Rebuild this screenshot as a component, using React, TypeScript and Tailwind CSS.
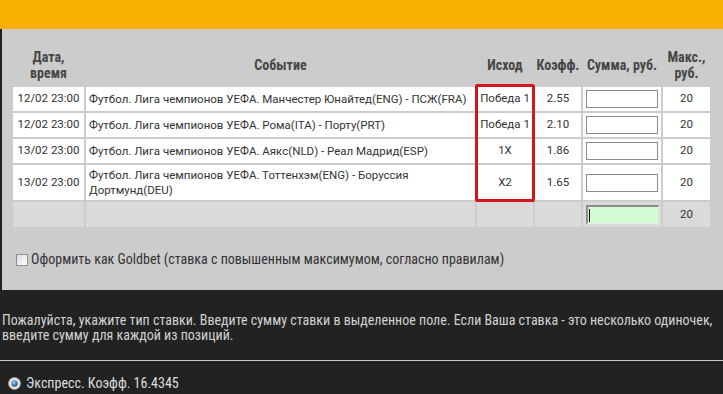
import React from "react";

type Row = { date: string; event: string; outcome: string; coef: string; max: string };

const ROWS: Row[] = [
  { date: "12/02 23:00", event: "Футбол. Лига чемпионов УЕФА. Манчестер Юнайтед(ENG) - ПСЖ(FRA)", outcome: "Победа 1", coef: "2.55", max: "20" },
  { date: "12/02 23:00", event: "Футбол. Лига чемпионов УЕФА. Рома(ITA) - Порту(PRT)", outcome: "Победа 1", coef: "2.10", max: "20" },
  { date: "13/02 23:00", event: "Футбол. Лига чемпионов УЕФА. Аякс(NLD) - Реал Мадрид(ESP)", outcome: "1X", coef: "1.86", max: "20" },
  { date: "13/02 23:00", event: "Футбол. Лига чемпионов УЕФА. Тоттенхэм(ENG) - Боруссия Дортмунд(DEU)", outcome: "X2", coef: "1.65", max: "20" },
];

const cond = "font-['Roboto_Condensed','Roboto',sans-serif] font-stretch-condensed";

function RadioIcon() {
  return (
    <svg width="13" height="13" viewBox="0 0 13 13" className="shrink-0">
      <defs>
        <radialGradient id="rg" cx="40%" cy="35%" r="60%">
          <stop offset="0%" stopColor="#9cd0f5" />
          <stop offset="100%" stopColor="#1d5d96" />
        </radialGradient>
      </defs>
      <circle cx="6.5" cy="6.5" r="6" fill="#e6e6e6" stroke="#9a9a9a" strokeWidth="0.8" />
      <circle cx="6.5" cy="6.5" r="3.2" fill="url(#rg)" />
    </svg>
  );
}

export default function App() {
  return (
    <div className="w-[723px] h-[394px] bg-[#222222] overflow-hidden">
      <div className="h-[29px] bg-[#f7af00]" />
      <div className="ml-[2px] bg-[#cccccc] h-[261px] pt-[14px] pl-[9px]">
        <div className="relative w-[701px]">
          <table className="w-[701px] border-separate border-spacing-[2px] table-fixed font-['Roboto',sans-serif] text-[11.5px] text-[#333]">
            <colgroup>
              <col className="w-[71px]" />
              <col className="w-[389px]" />
              <col className="w-[56px]" />
              <col className="w-[46px]" />
              <col className="w-[78px]" />
              <col className="w-[47px]" />
            </colgroup>
            <thead>
              <tr className={`h-[40px] ${cond} font-bold text-[14px] leading-[16px] text-[#464646]`}>
                <th className="font-bold">Дата,<br />время</th>
                <th className="font-bold">Событие</th>
                <th className="font-bold">Исход</th>
                <th className="font-bold">Коэфф.</th>
                <th className="font-bold whitespace-nowrap">Сумма, руб.</th>
                <th className="font-bold">Макс.,<br />руб.</th>
              </tr>
            </thead>
            <tbody>
              {ROWS.map((r, i) => (
                <tr key={i} className={i === 3 ? "h-[35px]" : "h-[24px]"}>
                  <td className="bg-white text-center px-[2px] whitespace-nowrap">{r.date}</td>
                  <td className="bg-white px-[3px] leading-[15px]">{r.event}</td>
                  <td className="bg-white text-center whitespace-nowrap">{r.outcome}</td>
                  <td className="bg-white text-center">{r.coef}</td>
                  <td className="bg-white px-[2px]">
                    <div className="h-[18px] w-[72px] mx-auto border border-[#8a8a8a] bg-white" />
                  </td>
                  <td className="bg-white text-center">{r.max}</td>
                </tr>
              ))}
              <tr className="h-[25px]">
                <td className="bg-[#dadada]" />
                <td className="bg-[#dadada]" />
                <td className="bg-[#dadada]" />
                <td className="bg-[#dadada]" />
                <td className="bg-[#dadada]">
                  <div className="h-[19px] w-[73px] mx-auto border-t-2 border-l-2 border-[#8c8c8c] border-r border-b border-r-[#e6e6e6] border-b-[#e6e6e6] bg-[#d4fcd4] flex items-center">
                    <div className="w-px h-[13px] bg-black ml-[1px]" />
                  </div>
                </td>
                <td className="bg-[#dadada] text-center">20</td>
              </tr>
            </tbody>
          </table>
          <div className="absolute left-[464px] top-[41px] w-[60px] h-[118px] border-[3px] border-[#d3161b] rounded-[2px] pointer-events-none" />
        </div>
        <div className={`flex items-center gap-[3px] mt-[20px] ml-[5px] ${cond} text-[14px] text-[#333]`}>
          <div className="w-[12px] h-[12px] border border-[#8f8f8f] bg-gradient-to-br from-[#dcdcdc] to-white" />
          <span>Оформить как Goldbet (ставка с повышенным максимумом, согласно правилам)</span>
        </div>
      </div>
      <div className={`${cond} text-[14px] leading-[15px] text-[#d2d2d2] pt-[23px] pl-[2px] pr-[4px] h-[70px]`}>
        Пожалуйста, укажите тип ставки. Введите сумму ставки в выделенное поле. Если Ваша ставка - это несколько одиночек, введите сумму для каждой из позиций.
      </div>
      <div className="h-px bg-[#c8c8c8]" />
      <div className={`flex items-center gap-[5px] pl-[8px] pt-[12px] ${cond} text-[14px] text-[#dedede]`}>
        <RadioIcon />
        <span>Экспресс. Коэфф. 16.4345</span>
      </div>
    </div>
  );
}
